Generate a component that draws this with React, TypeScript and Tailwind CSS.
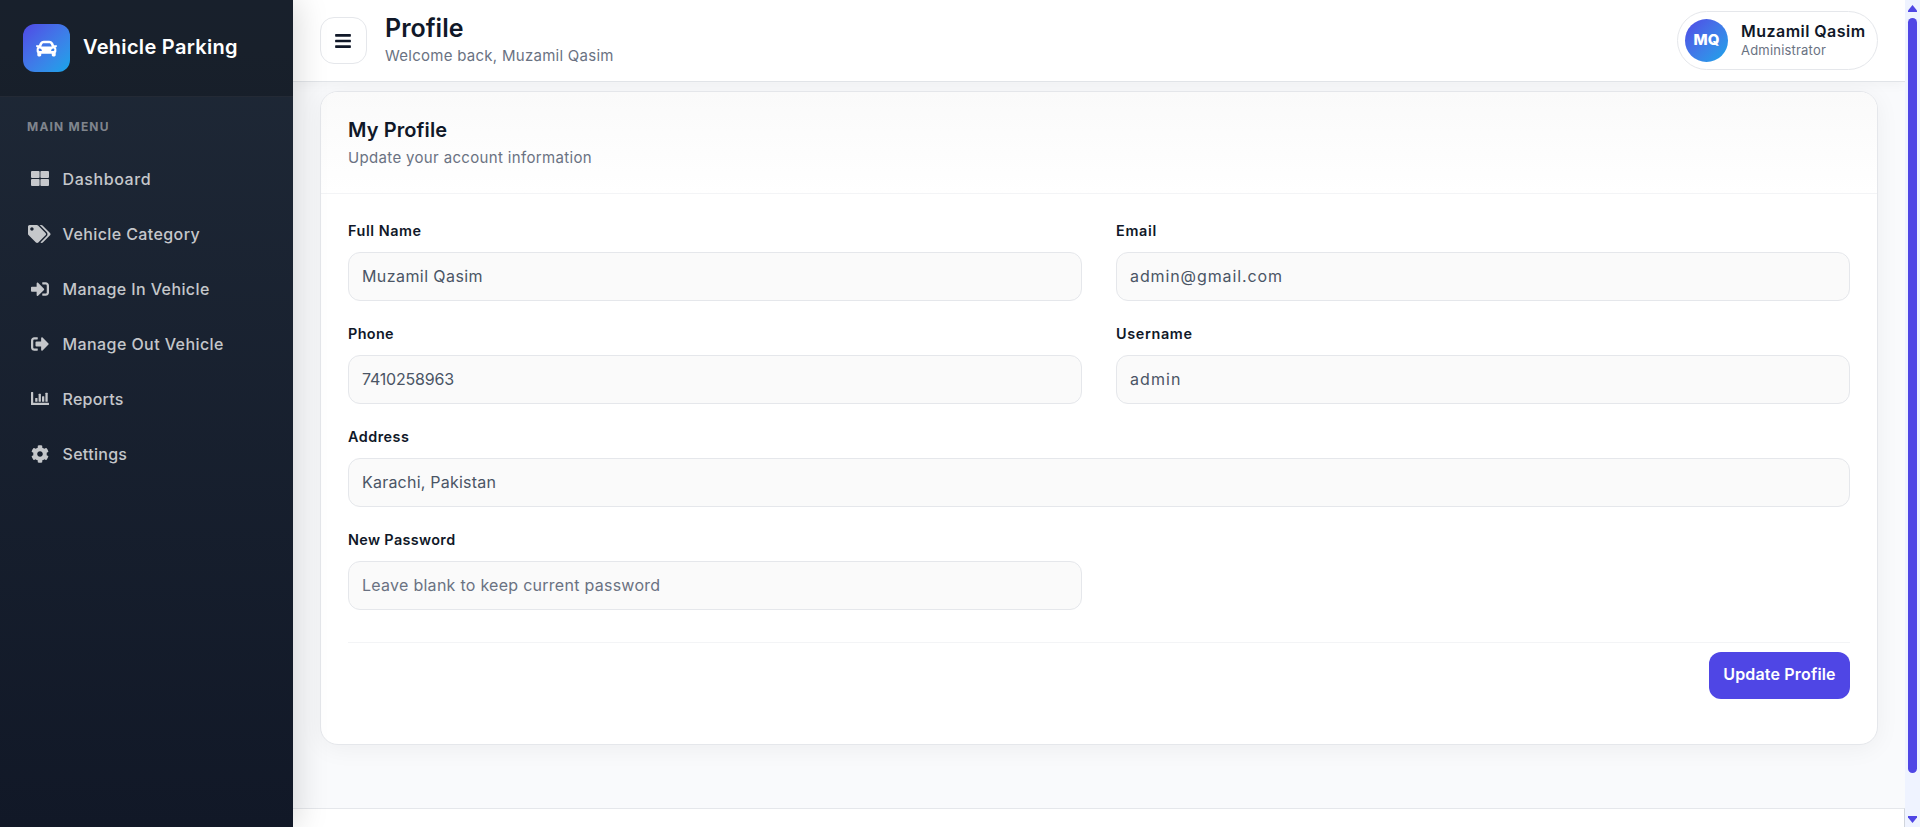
import type { ReactNode } from "react";
import { FaBars, FaCar, FaCog, FaSignInAlt, FaSignOutAlt, FaTags } from "react-icons/fa";

function GridIcon() {
  return (
    <svg width="18" height="15" viewBox="0 0 18 15" fill="currentColor">
      <rect width="8.6" height="7" rx="1" />
      <rect x="9.4" width="8.6" height="7" rx="1" />
      <rect y="8" width="8.6" height="7" rx="1" />
      <rect x="9.4" y="8" width="8.6" height="7" rx="1" />
    </svg>
  );
}

function ChartIcon() {
  return (
    <svg width="18" height="13" viewBox="0 0 18 13" fill="currentColor">
      <path d="M.5 0h1.2q.5 0 .5.5v10.3h15.3q.5 0 .5.5v1.2q0 .5-.5.5H.5q-.5 0-.5-.5V.5Q0 0 .5 0Z" />
      <rect x="4.2" y="6" width="2.3" height="3.8" rx=".5" />
      <rect x="7.6" y="1.8" width="2.3" height="8" rx=".5" />
      <rect x="11" y="4.2" width="2.3" height="5.6" rx=".5" />
      <rect x="14.4" y=".8" width="2.3" height="9" rx=".5" />
    </svg>
  );
}

const menu = [
  { label: "Dashboard", icon: <GridIcon />, text: "tracking-[0.58px]" },
  { label: "Vehicle Category", icon: <FaTags className="w-[22.5px]" />, text: "tracking-[0.4px]" },
  { label: "Manage In Vehicle", icon: <FaSignInAlt />, text: "tracking-[0.4px]" },
  { label: "Manage Out Vehicle", icon: <FaSignOutAlt />, text: "tracking-[0.42px]" },
  { label: "Reports", icon: <ChartIcon />, text: "tracking-[0.25px]" },
  { label: "Settings", icon: <FaCog />, text: "tracking-[0.3px]" },
];

function Sidebar() {
  return (
    <aside className="relative z-20 flex w-[293px] shrink-0 flex-col bg-gradient-to-b from-[#1f2937] to-[#111827] shadow-[4px_0_30px_rgba(0,0,0,0.15)]">
      <div className="flex h-[97px] items-center border-b border-white/5 bg-black/20 pl-[23px]">
        <div className="grid h-12 w-[47px] place-items-center rounded-xl bg-gradient-to-br from-[#4f46e5] to-[#0ea5e9] text-[21px] text-white">
          <FaCar />
        </div>
        <span className="ml-[13px] pb-[2px] whitespace-nowrap text-xl font-semibold tracking-[0.3px] text-white">
          Vehicle Parking
        </span>
      </div>
      <p className="mt-[20px] pl-[27px] text-xs leading-[20px] font-bold tracking-[0.1em] text-white/45">MAIN MENU</p>
      <nav className="mt-[14px] flex flex-col">
        {menu.map((item) => (
          <a key={item.label} className="flex h-[55px] items-center pl-[27.5px] text-white/75">
            <span className="grid w-6 place-items-center text-lg">{item.icon}</span>
            <span className={`ml-[11px] whitespace-nowrap text-base font-medium ${item.text}`}>{item.label}</span>
          </a>
        ))}
      </nav>
    </aside>
  );
}

function Topbar() {
  return (
    <header className="relative z-10 flex h-[82px] shrink-0 items-center border-b border-[#e1e4e8] bg-white px-[27px] shadow-[0_2px_12px_rgba(0,0,0,0.04)]">
      <button className="grid size-[47px] place-items-center rounded-[14px] border border-gray-200 bg-white pr-px text-lg text-gray-900">
        <FaBars />
      </button>
      <div className="ml-[18px]">
        <h1 className="-mt-px text-[25px] leading-[30px] font-semibold text-gray-900">Profile</h1>
        <p className="mt-px text-[15px] leading-[24px] tracking-[0.27px] text-gray-500">Welcome back, Muzamil Qasim</p>
      </div>
      <div className="ml-auto flex h-[59px] w-[201px] items-center rounded-full border border-gray-200 pl-[7px]">
        <div className="grid size-[43px] place-items-center rounded-full bg-gradient-to-br from-[#4f46e5] to-[#0ea5e9] text-[15px] font-extrabold text-white">
          MQ
        </div>
        <div className="-mt-[2px] ml-[13px] whitespace-nowrap">
          <p className="text-base leading-[20px] font-semibold tracking-[0.46px] text-gray-900">Muzamil Qasim</p>
          <p className="text-[13px] leading-[18px] tracking-[0.2px] text-gray-500">Administrator</p>
        </div>
      </div>
    </header>
  );
}

type FieldProps = { label: string; labelText: string; valueText: string; className?: string; children: ReactNode };

function Field({ label, labelText, valueText, className = "", children }: FieldProps) {
  return (
    <div className={className}>
      <p className={`h-[31px] text-[14.4px] leading-[20px] font-semibold text-gray-900 ${labelText}`}>{label}</p>
      <div
        className={`flex h-[49px] items-center rounded-xl border border-gray-200 bg-[#fafafa] px-[13px] pb-px text-base text-gray-600 ${valueText}`}
      >
        {children}
      </div>
    </div>
  );
}

function ProfileCard() {
  return (
    <section className="mt-[9px] h-[654px] overflow-hidden rounded-[18px] border border-gray-200 bg-white shadow-[0_4px_24px_rgba(0,0,0,0.05)]">
      <div className="h-[102px] border-b border-gray-100 bg-gradient-to-b from-[#fafafa] to-white px-[27px] pt-[25px]">
        <h2 className="text-xl leading-[27px] font-semibold tracking-[0.1px] text-gray-900">My Profile</h2>
        <p className="mt-[3px] text-[15px] leading-[22px] tracking-[0.34px] text-gray-500">Update your account information</p>
      </div>
      <div className="px-[27px] pt-[27px]">
        <div className="grid grid-cols-2 gap-x-[34px] gap-y-[23px]">
          <Field label="Full Name" labelText="tracking-[0.55px]" valueText="tracking-[0.42px]">
            Muzamil Qasim
          </Field>
          <Field label="Email" labelText="tracking-[0.7px]" valueText="tracking-[0.9px]">
            admin@gmail.com
          </Field>
          <Field label="Phone" labelText="tracking-[0.35px]" valueText="tracking-[-0.2px]">
            7410258963
          </Field>
          <Field label="Username" labelText="tracking-[0.65px]" valueText="tracking-[1.1px]">
            admin
          </Field>
          <Field label="Address" labelText="tracking-[0.5px]" valueText="tracking-[0.22px]" className="col-span-2">
            Karachi, Pakistan
          </Field>
          <Field label="New Password" labelText="tracking-[0.36px]" valueText="tracking-[0.27px]">
            <span className="text-gray-500">Leave blank to keep current password</span>
          </Field>
        </div>
        <div className="mt-8 flex justify-end border-t border-gray-100 pt-[9px]">
          <button className="h-[47px] w-[141px] whitespace-nowrap rounded-xl bg-[#4f46e5] pb-[3px] text-base font-semibold tracking-[0.17px] text-white">
            Update Profile
          </button>
        </div>
      </div>
    </section>
  );
}

function Scrollbar() {
  return (
    <div className="z-30 flex w-[15px] shrink-0 flex-col items-center bg-[#eff3ff] pt-[5px] pb-[4px] text-[#4f46e5]">
      <svg width="9" height="7" viewBox="0 0 9 7" fill="currentColor">
        <path d="M4.5 0 9 5.5V7H0V5.5Z" />
      </svg>
      <div className="mt-[6px] h-[755px] w-[9px] rounded-full bg-[#4f46e5]" />
      <svg className="mt-auto" width="9" height="7" viewBox="0 0 9 7" fill="currentColor">
        <path d="M4.5 7 9 1.5V0H0V1.5Z" />
      </svg>
    </div>
  );
}

export default function App() {
  return (
    <div className="flex h-[827px] w-[1920px] overflow-hidden bg-[#f9fafc] font-[Inter,sans-serif]">
      <Sidebar />
      <div className="flex min-w-0 flex-1 flex-col">
        <Topbar />
        <main className="flex-1 px-[27px]">
          <ProfileCard />
        </main>
        <footer className="h-[19px] border-t border-r border-t-gray-200 border-r-gray-300 bg-white" />
      </div>
      <Scrollbar />
    </div>
  );
}
